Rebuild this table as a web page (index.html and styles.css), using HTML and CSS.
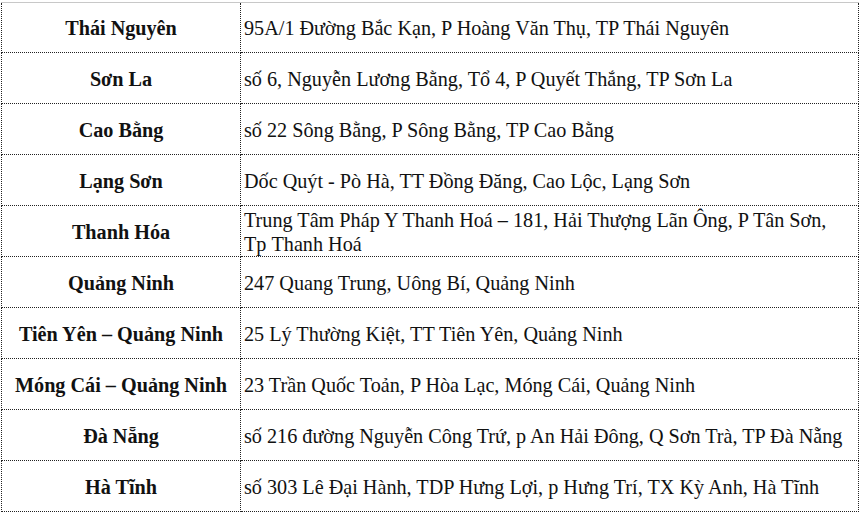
FILE: index.html
```html
<!DOCTYPE html>
<html lang="vi">
<head>
<meta charset="utf-8">
<link rel="stylesheet" href="styles.css">
</head>
<body>
<table class="tbl">
<tr class="first"><td class="name">Thái Nguyên</td><td class="addr">95A/1 Đường Bắc Kạn, P Hoàng Văn Thụ, TP Thái Nguyên</td></tr>
<tr><td class="name">Sơn La</td><td class="addr">số 6, Nguyễn Lương Bằng, Tổ 4, P Quyết Thắng, TP Sơn La</td></tr>
<tr><td class="name">Cao Bằng</td><td class="addr">số 22 Sông Bằng, P Sông Bằng, TP Cao Bằng</td></tr>
<tr><td class="name">Lạng Sơn</td><td class="addr">Dốc Quýt - Pò Hà, TT Đồng Đăng, Cao Lộc, Lạng Sơn</td></tr>
<tr><td class="name">Thanh Hóa</td><td class="addr">Trung Tâm Pháp Y Thanh Hoá – 181, Hải Thượng Lãn Ông, P Tân Sơn, Tp&nbsp;Thanh Hoá</td></tr>
<tr><td class="name">Quảng Ninh</td><td class="addr">247 Quang Trung, Uông Bí, Quảng Ninh</td></tr>
<tr><td class="name">Tiên Yên – Quảng Ninh</td><td class="addr">25 Lý Thường Kiệt, TT Tiên Yên, Quảng Ninh</td></tr>
<tr><td class="name">Móng Cái – Quảng Ninh</td><td class="addr">23 Trần Quốc Toản, P Hòa Lạc, Móng Cái, Quảng Ninh</td></tr>
<tr><td class="name">Đà Nẵng</td><td class="addr">số 216 đường Nguyễn Công Trứ, p An Hải Đông, Q Sơn Trà, TP Đà Nẵng</td></tr>
<tr><td class="name">Hà Tĩnh</td><td class="addr">số 303 Lê Đại Hành, TDP Hưng Lợi, p Hưng Trí, TX Kỳ Anh, Hà Tĩnh</td></tr>
</table>
</body>
</html>
```

FILE: styles.css
```css
html, body {
  margin: 0;
  padding: 0;
  background: #ffffff;
}
body {
  padding: 2px 0 0 1px;
  font-family: "Liberation Serif", "Times New Roman", serif;
  color: #111111;
}
.tbl {
  border-collapse: collapse;
  width: 858px;
  font-size: 20.2px;
  line-height: 24px;
}
.tbl td {
  border: 1px dotted #222;
  height: 49px;
  padding: 1px 4px 0;
  vertical-align: middle;
}
.tbl tr.first td {
  border-top: 1px solid #c8c8c8;
  height: 48px;
}
.name {
  width: 230px;
  text-align: center;
  font-weight: bold;
}
.addr {
  text-align: left;
}
.tbl td.addr {
  padding-left: 3px;
}
```
